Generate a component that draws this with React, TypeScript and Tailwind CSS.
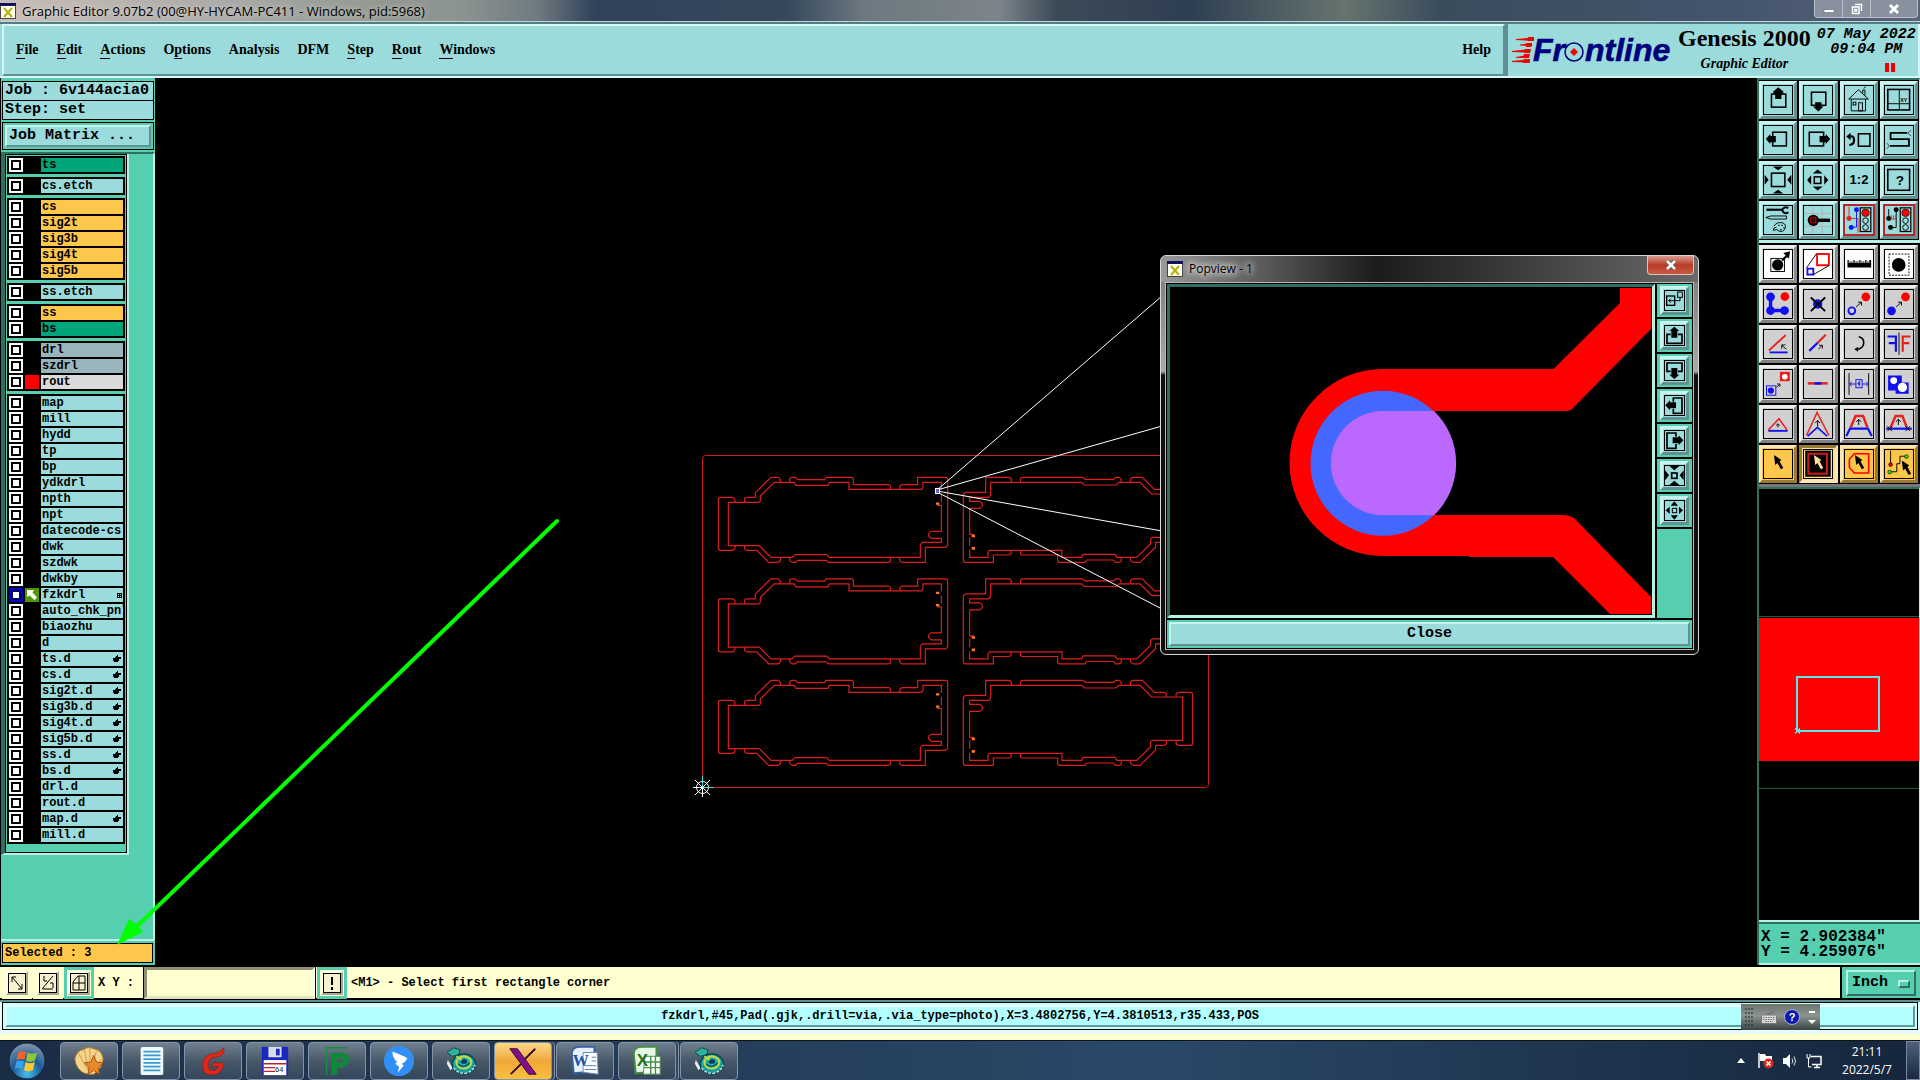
import React, { useState } from 'react';
import type { ReactNode } from 'react';

const MONO = "font-['Liberation_Mono',monospace] font-bold";
const SERIF = "font-['Liberation_Serif',serif] font-bold";
const SANS = "font-['Open_Sans',sans-serif]";

/* ---------- menu ---------- */

const menus: [string, number][] = [
  ['File', 0],
  ['Edit', 0],
  ['Actions', 0],
  ['Options', 1],
  ['Analysis', -1],
  ['DFM', -1],
  ['Step', 0],
  ['Rout', 0],
  ['Windows', 0],
];

function MenuLabel({ text, hot }: { text: string; hot: number }) {
  if (hot < 0) return <>{text}</>;
  return (
    <>
      {text.slice(0, hot)}
      <span className="border-b border-black pb-px">{text[hot]}</span>
      {text.slice(hot + 1)}
    </>
  );
}

/* ---------- layer list ---------- */

type Layer = { name: string; tone?: 'green' | 'gold' | 'slate' | 'grey'; mark?: 'hand' | 'grid'; swatch?: 'red' | 'arrow' };

const groups: Layer[][] = [
  [{ name: 'ts', tone: 'green' }],
  [{ name: 'cs.etch' }],
  [
    { name: 'cs', tone: 'gold' },
    { name: 'sig2t', tone: 'gold' },
    { name: 'sig3b', tone: 'gold' },
    { name: 'sig4t', tone: 'gold' },
    { name: 'sig5b', tone: 'gold' },
  ],
  [{ name: 'ss.etch' }],
  [{ name: 'ss', tone: 'gold' }, { name: 'bs', tone: 'green' }],
  [
    { name: 'drl', tone: 'slate' },
    { name: 'szdrl', tone: 'slate' },
    { name: 'rout', tone: 'grey', swatch: 'red' },
  ],
  [
    { name: 'map' },
    { name: 'mill' },
    { name: 'hydd' },
    { name: 'tp' },
    { name: 'bp' },
    { name: 'ydkdrl' },
    { name: 'npth' },
    { name: 'npt' },
    { name: 'datecode-cs' },
    { name: 'dwk' },
    { name: 'szdwk' },
    { name: 'dwkby' },
    { name: 'fzkdrl', mark: 'grid', swatch: 'arrow' },
    { name: 'auto_chk_pnl' },
    { name: 'biaozhu' },
    { name: 'd' },
    { name: 'ts.d', mark: 'hand' },
    { name: 'cs.d', mark: 'hand' },
    { name: 'sig2t.d', mark: 'hand' },
    { name: 'sig3b.d', mark: 'hand' },
    { name: 'sig4t.d', mark: 'hand' },
    { name: 'sig5b.d', mark: 'hand' },
    { name: 'ss.d', mark: 'hand' },
    { name: 'bs.d', mark: 'hand' },
    { name: 'drl.d' },
    { name: 'rout.d' },
    { name: 'map.d', mark: 'hand' },
    { name: 'mill.d' },
  ],
];

const tones = {
  green: 'bg-[#00a57c]',
  gold: 'bg-[#ffc64c]',
  slate: 'bg-[#9ab4bd]',
  grey: 'bg-[#dadada]',
};

function LayerRow({ layer }: { layer: Layer }) {
  const active = layer.swatch === 'arrow';
  return (
    <li className="flex h-4 items-center gap-0.5">
      <input
        type="checkbox"
        aria-label={`Show ${layer.name}`}
        className={`size-3.5 shrink-0 appearance-none border-2 ${
          active
            ? 'border-[#0000c8] bg-white shadow-[inset_0_0_0_2px_#000060]'
            : 'border-white bg-white shadow-[inset_0_0_0_2px_#000]'
        }`}
      />
      <span className={`flex size-3.5 shrink-0 items-center justify-center ${layer.swatch === 'red' ? 'bg-[#ff0000]' : active ? 'bg-[#4f9a00]' : 'bg-black'}`}>
        {active && (
          <svg viewBox="0 0 14 14" className="size-3.5" aria-hidden="true">
            <path d="M2 2H9L7.500 4.500L12 9.500L9.500 12L4.500 7.500L2 9Z" fill="#fff" />
          </svg>
        )}
      </span>
      <button
        type="button"
        className={`flex h-3.5 min-w-0 flex-1 items-center overflow-hidden whitespace-nowrap pl-px text-left text-[12px] leading-[14px] ${
          layer.tone ? tones[layer.tone] : 'bg-[#9bdbdb]'
        }`}
      >
        {layer.name}
        {layer.mark === 'hand' && (
          <svg viewBox="0 0 8 8" className="mr-0.5 ml-auto size-2 shrink-0" aria-hidden="true" shapeRendering="crispEdges">
            <path d="M4 0H5V2H8V4H6V6H5V7H1V6H0V3H2V2H3V1H4Z" />
          </svg>
        )}
        {layer.mark === 'grid' && (
          <svg viewBox="0 0 5 5" className="mr-px ml-auto size-[5px] shrink-0" aria-hidden="true" shapeRendering="crispEdges">
            <path d="M0 0h5v5H0z" />
            <path d="M1 1h1v1H1zM3 1h1v1H3zM1 3h1v1H1zM3 3h1v1H3z" fill="#9bdbdb" />
          </svg>
        )}
      </button>
    </li>
  );
}

function Sidebar() {
  return (
    <aside className={`flex w-[155px] shrink-0 flex-col border-l border-black bg-[#55cfb0] ${MONO}`}>
      <div className="px-px pt-[3px]">
        <div className="border border-black bg-[#9bdbdb] px-0.5 text-[15px] leading-[18px] whitespace-nowrap">Job : 6v144acia0</div>
        <div className="border border-t-0 border-black bg-[#9bdbdb] px-0.5 text-[15px] leading-[18px]">Step: set</div>
        <div className="mt-0.5 border border-black bg-[#55cfb0] p-0.5">
          <button
            type="button"
            className="block w-full border-2 border-t-[#c8f4f0] border-r-[#5f9291] border-b-[#5f9291] border-l-[#c8f4f0] bg-[#9bdbdb] px-0.5 text-left text-[15px] leading-[18px]"
          >
            Job Matrix ...
          </button>
        </div>
      </div>
      <div className="mt-0.5 flex flex-1 flex-col border-t-2 border-r-2 border-b-2 border-t-[#2f6e61] border-r-[#b6f2e4] border-b-[#b6f2e4]">
        <div className="w-32 border-r-2 border-b-2 border-l-4 border-r-[#b6f2e4] border-b-[#b6f2e4] border-l-[#2f6e61]">
          <div className="border border-black px-px pt-px pb-2">
            {groups.map((g, i) => (
              <ul key={i} className="mb-[3px] border border-black bg-black px-px last:mb-0">
                {g.map((l) => (
                  <LayerRow key={l.name} layer={l} />
                ))}
              </ul>
            ))}
          </div>
        </div>
      </div>
      <div className="my-0.5 mr-0.5 ml-px border border-black bg-[#ffc64c] px-0.5 text-[12px] leading-[18px]">Selected : 3</div>
    </aside>
  );
}

/* ---------- tool icons ---------- */

const K = '#000';
const R = '#e8201c';
const B = '#1010f0';

const cursor = (x: number, y: number, fill = K) => (
  <path transform={`translate(${x} ${y})`} d="M0 0 L24 16 L18 20 L30 42 L22 46 L11 26 L4 32 Z" fill={fill} />
);

const trafficLight = (
  <g>
    <rect x="49" y="6" width="34" height="76" fill="#9bdbdb" stroke={K} strokeWidth="4" />
    <circle cx="66" cy="22" r="12" fill="#f00" stroke={K} strokeWidth="2" />
    <circle cx="66" cy="47" r="9" fill="none" stroke={K} strokeWidth="3" />
    <circle cx="66" cy="69" r="9" fill="none" stroke={K} strokeWidth="3" />
  </g>
);

type Tool = { label: string; art: ReactNode };

const viewTools: Tool[] = [
  { label: 'Pan up', art: <><rect x="24" y="26" width="46" height="42" fill="none" stroke={K} strokeWidth="5" /><path d="M46 4L62 18V24H56V42H36V24H30V18Z" /></> },
  { label: 'Pan down', art: <><rect x="24" y="20" width="46" height="42" fill="none" stroke={K} strokeWidth="5" /><path d="M36 52H56V66H63L46 82L29 66H36Z" /></> },
  { label: 'Home', art: <g fill="none" stroke={K} strokeWidth="3"><path d="M12 42L43 12L75 42Z" /><path d="M20 42V80H66V42" /><rect x="44" y="54" width="12" height="26" /><rect x="26" y="52" width="9" height="9" /><path d="M57 24V13H64V30M61 8L66 2" /></g> },
  { label: 'Coordinates', art: <><rect x="9" y="11" width="70" height="66" fill="none" stroke={K} strokeWidth="5" /><path d="M46 11V77M9 57H79" stroke={K} strokeWidth="3" /><text x="49" y="53" fontSize="17" fontWeight="700" fontFamily="Liberation Sans">XY</text></> },
  { label: 'Pan left', art: <><rect x="28" y="20" width="44" height="44" fill="none" stroke={K} strokeWidth="5" /><path d="M6 42L20 26V32H38V52H20V58Z" /></> },
  { label: 'Pan right', art: <><rect x="17" y="20" width="46" height="44" fill="none" stroke={K} strokeWidth="5" /><path d="M84 42L70 26V32H50V52H70V58Z" /></> },
  { label: 'Previous view', art: <><rect x="43" y="25" width="37" height="40" fill="none" stroke={K} strokeWidth="5" /><path d="M13 33H20Q29 33 29 46Q29 60 14 61" fill="none" stroke={K} strokeWidth="7" /><path d="M4 34L18 22V46Z" /></> },
  { label: 'Serpentine', art: <><path d="M72 22H18V42H77V64H16" fill="none" stroke={K} strokeWidth="6" /><path d="M74 22L84 14M74 24L84 32M14 64L6 55M14 64L6 73" stroke={K} strokeWidth="2" /></> },
  { label: 'Zoom out', art: <><rect x="24" y="23" width="43" height="43" fill="none" stroke={K} strokeWidth="5" /><path d="M28 2H62L45 14ZM28 88H62L45 76ZM2 28V60L15 44ZM88 28V60L75 44Z" /></> },
  { label: 'Zoom in', art: <><rect x="33" y="35" width="21" height="21" fill="none" stroke={K} strokeWidth="5" /><path d="M28 24H60L44 11ZM28 66H60L44 79ZM23 30V60L10 45ZM65 30V60L78 45Z" /></> },
  { label: 'Scale 1:2', art: <text x="45" y="59" textAnchor="middle" fontSize="42" fontWeight="700" fontFamily="Liberation Sans">1:2</text> },
  { label: 'Help', art: <><rect x="9" y="11" width="70" height="67" fill="none" stroke={K} strokeWidth="5" /><text x="48" y="62" textAnchor="middle" fontSize="44" fontWeight="700" fontFamily="Liberation Sans">?</text></> },
  { label: 'Setup', art: <><path d="M8 12H58" stroke={K} strokeWidth="7" /><path d="M78 7A11 9 0 1 0 78 20" fill="none" stroke={K} strokeWidth="6" /><path d="M6 37L22 32H72V42H22Z" fill="none" stroke={K} strokeWidth="3" /><path d="M32 65Q40 50 60 54Q74 60 66 76Q54 88 42 76L30 78Q28 70 40 68" fill="none" stroke={K} strokeWidth="3" /><path d="M46 62h4M56 62h4M62 70h4M52 76h4" stroke={K} strokeWidth="4" /></> },
  { label: 'Probe', art: <><path d="M28 0V90M58 0V90M0 24H90M0 66H90" stroke="#c3a0a5" strokeWidth="2" /><path d="M28 46H84" stroke={K} strokeWidth="11" /><circle cx="30" cy="46" r="18" /><rect x="22" y="38" width="16" height="16" fill="none" stroke="#f00" strokeWidth="3" /><rect x="28" y="44" width="4" height="4" fill="#f00" /></> },
  { label: 'Net check', art: <><path d="M13 2V40M13 40H42V86" fill="none" stroke={R} strokeWidth="3" /><circle cx="13" cy="40" r="8" fill={R} /><path d="M37 12V68H20" fill="none" stroke={B} strokeWidth="3" /><circle cx="37" cy="12" r="8" fill={B} /><circle cx="20" cy="69" r="8" fill={B} />{trafficLight}</> },
  { label: 'Net compare', art: <><path d="M12 10V40M36 12V69H18" fill="none" stroke={K} strokeWidth="3" /><circle cx="12" cy="40" r="8" /><circle cx="36" cy="12" r="8" /><circle cx="18" cy="69" r="8" /><path d="M20 30V42H34M27 30V42M34 30V42" fill="none" stroke={R} strokeWidth="3" />{trafficLight}</> },
];

const whiteTools: Tool[] = [
  { label: 'Resize feature', art: <><rect x="22" y="27" width="44" height="42" fill="none" stroke={K} strokeWidth="3" /><circle cx="44" cy="48" r="18" /><path d="M58 34L76 16" stroke={K} strokeWidth="7" /><path d="M62 10L84 4L80 28Z" /></> },
  { label: 'Transform', art: <><rect x="42" y="13" width="38" height="36" fill="none" stroke="#f00" strokeWidth="6" /><rect x="11" y="60" width="19" height="19" fill="none" stroke={B} strokeWidth="6" /><path d="M8 58L40 12M32 78L80 50" stroke={K} strokeWidth="3" /></> },
  { label: 'Measure', art: <path d="M8 56V32H12V42H15V36H18V42H21V36H24V42H27V32H31V42H34V36H37V42H40V36H43V42H46V32H50V42H53V36H56V42H59V36H62V42H65V32H69V42H72V36H75V42H78V32H84V56Z" /> },
  { label: 'Select area', art: <><rect x="13" y="13" width="64" height="68" fill="none" stroke={K} strokeWidth="3" strokeDasharray="6 4" /><circle cx="44" cy="48" r="22" /></> },
];

const editTools: Tool[] = [
  { label: 'Add chain', art: <><path d="M21 22V66H66" fill="none" stroke={B} strokeWidth="11" /><circle cx="21" cy="22" r="14" fill={B} /><circle cx="21" cy="66" r="14" fill={B} /><circle cx="66" cy="66" r="14" fill={B} /><circle cx="67" cy="21" r="14" fill="#f00" /></> },
  { label: 'Delete', art: <><circle cx="44" cy="45" r="15" fill={B} /><path d="M22 24L68 68M68 24L22 68" stroke={K} strokeWidth="6" /></> },
  { label: 'Move', art: <><circle cx="67" cy="22" r="14" fill="#f00" /><circle cx="22" cy="67" r="11" fill="none" stroke={B} strokeWidth="6" /><path d="M36 54L52 40M42 39H53V50" fill="none" stroke={K} strokeWidth="3" /></> },
  { label: 'Copy', art: <><circle cx="66" cy="22" r="14" fill="#f00" /><circle cx="21" cy="67" r="14" fill={B} /><path d="M36 54L52 40M42 39H53V50" fill="none" stroke={K} strokeWidth="3" /></> },
  { label: 'Rotate', art: <><path d="M16 66L70 16" stroke={R} strokeWidth="6" /><path d="M18 72H76" stroke={B} strokeWidth="6" /><path d="M72 62L58 50M57 60V48H69" fill="none" stroke={K} strokeWidth="3" /></> },
  { label: 'Stretch', art: <><path d="M44 41L70 15" stroke={R} strokeWidth="7" /><path d="M17 67L44 41" stroke={B} strokeWidth="7" /><path d="M46 62L58 50M48 49H59V60" fill="none" stroke={K} strokeWidth="3" /></> },
  { label: 'Arc', art: <><path d="M44 22Q62 26 60 44Q58 60 38 62" fill="none" stroke={K} strokeWidth="5" /><path d="M30 62L42 54V70Z" /></> },
  { label: 'Mirror', art: <><path d="M45 8V80" stroke={K} strokeWidth="3" /><path d="M8 21H35V70M12 42H35" fill="none" stroke={B} strokeWidth="7" /><path d="M82 21H57V70M78 42H57" fill="none" stroke={R} strokeWidth="7" /></> },
  { label: 'Replace', art: <><rect x="51" y="6" width="32" height="30" fill={R} /><circle cx="67" cy="22" r="9" fill="#fff" /><rect x="8" y="51" width="30" height="30" fill="#d0d0d0" stroke={B} strokeWidth="3" /><circle cx="22" cy="66" r="10" fill={B} /><path d="M40 56L50 46M42 45H51V54" fill="none" stroke={K} strokeWidth="3" /></> },
  { label: 'Break', art: <><path d="M12 43H76" stroke={R} strokeWidth="8" /><path d="M34 43H56" stroke={B} strokeWidth="8" /></> },
  { label: 'Spacing', art: <><path d="M13 10V80M76 10V80" stroke={K} strokeWidth="3" /><rect x="35" y="31" width="20" height="26" fill="none" stroke={B} strokeWidth="3" /><path d="M14 45H34M56 45H75M22 38L15 45L22 52M68 38L75 45L68 52M50 34L40 45H50M46 38V52" fill="none" stroke={B} strokeWidth="3" /></> },
  { label: 'Merge', art: <><path d="M10 18H54V40H76V76H34V66H10Z" fill={B} /><circle cx="28" cy="34" r="11" fill="#fff" /><circle cx="56" cy="56" r="15" fill="#fff" /></> },
  { label: 'Corner', art: <><path d="M14 64L48 28L74 64" fill="none" stroke={R} strokeWidth="5" /><path d="M14 67H76" stroke={B} strokeWidth="6" /><path d="M45 56V46M39 50L45 44L51 50" fill="none" stroke={K} strokeWidth="3" /></> },
  { label: 'Sharp corner', art: <><path d="M8 82L42 8L80 82" fill="none" stroke={R} strokeWidth="5" /><path d="M12 84L43 56L74 84" fill="none" stroke={B} strokeWidth="5" /><path d="M44 52V34M36 42L44 34L52 42" fill="none" stroke={K} strokeWidth="3" /></> },
  { label: 'Trapezoid', art: <><path d="M18 56L34 19H58L72 56" fill="none" stroke={R} strokeWidth="8" /><path d="M4 84L16 60H74L86 84" fill="none" stroke={B} strokeWidth="7" /><path d="M44 48V30M36 38L44 30L52 38" fill="none" stroke={K} strokeWidth="3" /></> },
  { label: 'Trapezoid cut', art: <><path d="M18 56L34 19H56L70 56" fill="none" stroke={R} strokeWidth="8" /><path d="M4 60H86" stroke={B} strokeWidth="7" /><path d="M43 48V30M35 38L43 30L51 38M8 52L22 68M22 52L8 68M66 52L80 68M80 52L66 68" fill="none" stroke={K} strokeWidth="3" /></> },
];

const selectTools: Tool[] = [
  { label: 'Select', art: cursor(32, 16) },
  { label: 'Select rectangle', art: <><rect x="4" y="2" width="82" height="84" fill="#000" /><rect x="14" y="12" width="60" height="64" fill="none" stroke="#c4181c" strokeWidth="7" />{cursor(32, 16, '#ffdd9a')}</> },
  { label: 'Select polygon', art: <><path d="M30 12H76V74H30L14 56V30Z" fill="none" stroke="#f00" strokeWidth="5" />{cursor(32, 16)}</> },
  { label: 'Select net', art: <><path d="M18 2V46M20 70H38V44H48V20H66" fill="none" stroke={K} strokeWidth="3" /><circle cx="18" cy="47" r="6" fill="#e00" stroke={K} strokeWidth="2" /><circle cx="15" cy="71" r="6" fill="#2e0" stroke={K} strokeWidth="2" /><circle cx="69" cy="21" r="6" fill="#2e0" stroke={K} strokeWidth="2" />{cursor(54, 34)}</> },
];

type Tint = 'cyan' | 'red' | 'white' | 'grey' | 'gold' | 'goldOn';

const tints: Record<Tint, string> = {
  cyan: 'border-t-[#c9f3f0] border-l-[#c9f3f0] border-r-[#5f9291] border-b-[#5f9291] bg-[#9bdbdb]',
  red: 'border-t-[#c9f3f0] border-l-[#c9f3f0] border-r-[#5f9291] border-b-[#5f9291] bg-[#b3262c]',
  white: 'border-t-[#eeeeee] border-l-[#eeeeee] border-r-[#8c8c8c] border-b-[#8c8c8c] bg-[#d8d8d8]',
  grey: 'border-t-[#ececec] border-l-[#ececec] border-r-[#828282] border-b-[#828282] bg-[#d0d0d0]',
  gold: 'border-t-[#ffe6b0] border-l-[#ffe6b0] border-r-[#9a7a30] border-b-[#9a7a30] bg-[#ffc64c]',
  goldOn: 'border-t-[#9a7a30] border-l-[#9a7a30] border-r-[#ffe6b0] border-b-[#ffe6b0] bg-[#ffdd9a]',
};

const faces: Record<Tint, string> = {
  cyan: 'border-black bg-[#9bdbdb]',
  red: 'border-[#b3262c] bg-[#9bdbdb]',
  white: 'border-black bg-white',
  grey: 'border-black bg-[#d0d0d0]',
  gold: 'border-black bg-[#ffc64c]',
  goldOn: 'border-black bg-[#ffdd9a]',
};

function ToolButton({ tool, tint }: { tool: Tool; tint: Tint }) {
  return (
    <button type="button" aria-label={tool.label} className={`flex h-[38px] items-center justify-center border-3 ${tints[tint]}`}>
      <span className={`block size-[30px] border ${faces[tint]}`}>
        <svg viewBox="0 0 90 90" className="size-full overflow-hidden">
          {tool.art}
        </svg>
      </span>
    </button>
  );
}

function RightPanel() {
  return (
    <aside className="flex w-[163px] shrink-0 flex-col border-l-2 border-[#2f6e61] bg-black">
      <div className="grid grid-cols-4 gap-0.5 border-t-2 border-r border-b-3 border-t-[#2f6e61] border-r-[#b6f2e4] border-b-[#b6f2e4] bg-black pt-px pr-px pb-px">
        {viewTools.map((t, i) => (
          <ToolButton key={t.label} tool={t} tint={i > 13 ? 'red' : 'cyan'} />
        ))}
      </div>
      <div className="grid grid-cols-4 gap-0.5 border-b-3 border-b-[#777777] bg-black pt-0.5 pr-0.5 pb-px">
        {whiteTools.map((t) => (
          <ToolButton key={t.label} tool={t} tint="white" />
        ))}
        {editTools.map((t) => (
          <ToolButton key={t.label} tool={t} tint="grey" />
        ))}
        {selectTools.map((t, i) => (
          <ToolButton key={t.label} tool={t} tint={i === 1 ? 'goldOn' : 'gold'} />
        ))}
      </div>
      <div className="flex min-h-0 flex-1 flex-col border-t-2 border-r border-b-2 border-t-[#2f6e61] border-r-[#b6f2e4] border-b-[#b6f2e4]">
        <svg viewBox="0 0 160 430" preserveAspectRatio="none" className="h-full w-full" role="img" aria-label="Overview map" shapeRendering="crispEdges">
          <path d="M0 127.500H160M0 298.500H160" stroke="#1c5c2c" />
          <rect x="0" y="129" width="160" height="142" fill="#ff0000" />
          <rect x="37.500" y="187.500" width="82" height="54" fill="none" stroke="#62e6e6" strokeWidth="2" />
          <path d="M36 239L41 244M41 239L36 244" stroke="#62e6e6" />
        </svg>
      </div>
      <output className={`border-t-2 border-b-2 border-t-[#2f6e61] border-b-[#b6f2e4] bg-[#55cfb0] px-0.5 pt-1.5 pb-[3px] text-[16px] leading-[15px] ${MONO}`}>
        <span className="block">X = 2.902384"</span>
        <span className="block">Y = 4.259076"</span>
      </output>
    </aside>
  );
}

/* ---------- board view ---------- */

const boardPath =
  'M134 187Q138 172 125 172H92Q85 172 85 179V324Q85 331 92 331H125Q138 329 134 317' +
  'M166 187Q158 172 173 172H196V158L243 112H263Q275 117 270 127' +
  'M166 317Q158 328 173 331H200L236 367H264Q275 364 270 352' +
  'M301 127Q294 112 308 112H316L323 119H404L408 112H486L490 116V134H597Q605 138 600 147' +
  'M632 147Q624 137 638 134H683V112H766Q773 112 773 119V316L767 322H706V367H636Q624 363 631 352' +
  'M600 352Q606 367 594 367H416L407 361H322L316 367H307Q295 362 301 352' +
  'M754 150V127H699V142L695 148H477V127H418L414 136H318L312 127H253L211 168V183L206 187H115V317H208L243 352H306L315 344H410L418 352H691V314L697 307H754V295H724Q706 284 724 274H754V196H741M754 187V162';

function Boards() {
  return (
    <svg viewBox="155 78 1602 887" className="h-full w-full bg-black" role="img" aria-label="Panel layout">
      <rect x="702.500" y="455.500" width="506" height="332" rx="3" fill="none" stroke="#d01c1c" />
      <g transform="translate(690 440) scale(0.33333)">
        {[0, 304.5, 609].map((y) => (
          <g key={y} transform={`translate(0 ${y})`} fill="none" stroke="#e01e1e" strokeWidth="3.500">
            <path d={boardPath} />
            <path d="M738 154h10M738 191h10" stroke="#f08020" strokeWidth="7" />
            <g transform="translate(1593 479) rotate(180)">
              <path d={boardPath} />
              <path d="M738 154h10M738 191h10" stroke="#ff7020" strokeWidth="8" />
            </g>
          </g>
        ))}
      </g>
      <g stroke="#ffffff" fill="none">
        <path d="M937 490L1162 296M937 490L1162 426M937 491L1162 531M937 492L1162 609" />
        <rect x="935.500" y="488.500" width="4" height="5" fill="#6a60d0" />
        <path d="M693 787.500H712M702.500 778V797M695 780L710 795M710 780L695 795" />
        <circle cx="702.500" cy="787.500" r="6" />
        <path d="M703 787.500H714M702.500 776V787" stroke="#50d8d8" />
      </g>
    </svg>
  );
}

/* ---------- pop view window ---------- */

const popTools: Tool[] = [
  { label: 'Link view', art: <><rect x="8" y="18" width="24" height="28" fill="none" stroke={K} strokeWidth="4" /><rect x="41" y="6" width="14" height="16" fill="none" stroke={K} strokeWidth="3" /><path d="M14 32H48V22M20 26L14 32L20 38" fill="none" stroke={K} strokeWidth="3" /></> },
  { label: 'Pop pan up', art: <><path d="M20 28H9V55H54V28H42" fill="none" stroke={K} strokeWidth="5" /><path d="M31 5L46 18H40V38H22V18H16Z" /></> },
  { label: 'Pop pan down', art: <><path d="M20 34H9V9H54V34H42" fill="none" stroke={K} strokeWidth="5" /><path d="M31 57L46 44H40V24H22V44H16Z" /></> },
  { label: 'Pop pan left', art: <><path d="M28 20V9H54V55H28V42" fill="none" stroke={K} strokeWidth="5" /><path d="M4 31L18 16V22H36V40H18V46Z" /></> },
  { label: 'Pop pan right', art: <><path d="M36 20V9H9V55H36V42" fill="none" stroke={K} strokeWidth="5" /><path d="M58 31L44 16V22H26V40H44V46Z" /></> },
  { label: 'Pop zoom out', art: <><rect x="23" y="24" width="16" height="16" fill="none" stroke={K} strokeWidth="5" /><path d="M16 3H46L31 16ZM16 60H46L31 47ZM3 16V46L15 31ZM59 16V46L47 31Z" /></> },
  { label: 'Pop zoom in', art: <><rect x="25" y="25" width="13" height="13" fill="none" stroke={K} strokeWidth="3" /><path d="M20 17H42L31 4ZM20 46H42L31 59ZM17 20V42L5 31ZM45 20V42L57 31Z" /></> },
];

function XAppIcon() {
  return (
    <svg viewBox="0 0 16 16" className="size-4 shrink-0" aria-hidden="true">
      <path d="M0 0h16v16H0z" fill="#444" />
      <path d="M1 3h14v12H1z" fill="#fffef0" />
      <path d="M0 0h16v3H0z" fill="#101060" />
      <path d="M4 5l8 9M12 5l-8 9" stroke="#b8b010" strokeWidth="2" />
    </svg>
  );
}

function PopView({ onClose }: { onClose: () => void }) {
  return (
    <section
      aria-label="Popview - 1"
      className="absolute top-[255px] left-[1160px] flex w-[539px] flex-col rounded-md border border-[#d8d8d8] bg-linear-to-b from-[#777777] from-0% via-[#a8a8a8] via-29% to-[#101010] to-30% px-1 pb-1"
    >
      <header className="-mx-1 flex h-[26px] items-center gap-1.5 rounded-t-md bg-linear-to-r from-[#9a9a9a] via-[#1c1c1c] via-40% to-[#6a6a6a] pl-1.5">
        <XAppIcon />
        <h2 className={`flex-1 text-[12px] leading-5 text-black [text-shadow:0_0_6px_#e0e0e0,0_0_6px_#e0e0e0,0_0_8px_#e0e0e0] ${SANS}`}>Popview - 1</h2>
        <button
          type="button"
          aria-label="Close window"
          onClick={onClose}
          className="mr-1 flex h-[19px] w-[47px] items-center justify-center self-start rounded-b border border-t-0 border-[#e0c0b8] bg-linear-to-b from-[#d89a90] via-[#b83a28] via-50% to-[#c85a40]"
        >
          <svg viewBox="0 0 12 10" className="h-2.5 w-3" aria-hidden="true">
            <path d="M2 1l8 8M10 1L2 9" stroke="#555" strokeWidth="4" />
            <path d="M2 1l8 8M10 1L2 9" stroke="#fff" strokeWidth="2.500" />
          </svg>
        </button>
      </header>
      <div className="border border-[#b8b8b8] bg-black p-px">
        <div className="flex">
          <div className="min-w-0 flex-1 border-3 border-t-[#2f6e61] border-r-[#b6f2e4] border-b-[#b6f2e4] border-l-[#2f6e61]">
            <svg viewBox="20 37 482 328" className="block h-auto w-full" role="img" aria-label="Magnified pad">
              <path
                fill="#ff0000"
                d="M470 38V53L403.500 119H233A93.300 93.300 0 0 0 233 306H319V307H403L460 364H501V347L424 268Q419 265 411 265H233A52 52 0 0 1 233 161H416Q421 161 424 157L501 79V38Z"
              />
              <circle cx="233" cy="213.300" r="72.500" fill="#4468ff" />
              <path fill="#bb68ff" d="M233 161H284A72.500 72.500 0 0 1 284 265.300H233A52 52 0 0 1 233 161Z" />
            </svg>
          </div>
          <div className="ml-0.5 flex w-[35px] flex-col bg-[#55cfb0]">
            {popTools.map((t) => (
              <button key={t.label} type="button" aria-label={t.label} className="flex h-[35px] items-center justify-center border-b-2 border-black">
                <span className="flex size-[29px] items-center justify-center border-3 border-t-[#c9f3f0] border-r-[#5f9291] border-b-[#5f9291] border-l-[#c9f3f0] bg-[#9bdbdb]">
                  <svg viewBox="0 0 63 63" className="size-[21px] shrink-0">
                    <rect x="1.500" y="1.500" width="60" height="60" fill="none" stroke={K} strokeWidth="3" />
                    {t.art}
                  </svg>
                </span>
              </button>
            ))}
          </div>
        </div>
        <div className="mt-0.5 bg-[#55cfb0] p-0.5">
          <button
            type="button"
            onClick={onClose}
            className={`block w-full border-2 border-t-[#c8f4f0] border-r-[#5f9291] border-b-[#5f9291] border-l-[#c8f4f0] bg-[#9bdbdb] text-center text-[15px] leading-5 ${MONO}`}
          >
            Close
          </button>
        </div>
      </div>
    </section>
  );
}

/* ---------- header ---------- */

function TitleBar() {
  return (
    <header className="flex h-[22px] shrink-0 items-center gap-1.5 border-b border-[#c8d0d8] bg-[linear-gradient(to_right,#c9bdb6_0%,#a9aaa8_12%,#93988f_20%,#8c9492_24%,#6f7a80_28%,#2f4258_31%,#35485c_41%,#6d7880_45%,#7c858a_52%,#3c4a58_55%,#2e3f52_62%,#66746f_70%,#3a4c5c_75%,#44546c_90%,#56647a_100%)]">
      <XAppIcon />
      <h1 className={`flex-1 text-[13px] leading-5 text-black [text-shadow:0_0_6px_#ffffffb0] ${SANS}`}>
        Graphic Editor 9.07b2 (00@HY-HYCAM-PC411 - Windows, pid:5968)
      </h1>
      <div className="mr-0.5 flex h-[18px] self-start overflow-hidden rounded-b border border-t-0 border-[#b8c0c8] bg-[#8990a0]">
        <button type="button" aria-label="Minimize" className="flex w-7 items-center justify-center border-r border-[#b8c0c8]">
          <svg viewBox="0 0 12 12" className="size-3"><path d="M1 6.500h10v3H1z" fill="#fff" stroke="#556" strokeWidth=".5" /></svg>
        </button>
        <button type="button" aria-label="Restore" className="flex w-7 items-center justify-center border-r border-[#b8c0c8]">
          <svg viewBox="0 0 12 12" className="size-3"><path d="M4 1.500h6.500V8M1.500 4H8v6.500H1.500zM4 6.500h1.500V8H4z" fill="none" stroke="#fff" strokeWidth="1.500" /></svg>
        </button>
        <button type="button" aria-label="Close" className="flex w-[46px] items-center justify-center">
          <svg viewBox="0 0 12 12" className="size-3"><path d="M2 2l8 8M10 2l-8 8" stroke="#fff" strokeWidth="3" /></svg>
        </button>
      </div>
    </header>
  );
}

function Logo() {
  return (
    <svg viewBox="0 -6 166 42" className="h-[42px] w-[166px] shrink-0" role="img" aria-label="Frontline">
      <g fill="#f00000">
        <path d="M4 3L22 1.500V5L4 4ZM8 8.500L20 7V10L8 9.500ZM0 15L18 13V16.500L0 16ZM4 21L16 19V22L4 22ZM0 25L18 23V26.500L0 26Z" />
        <path d="M16 1h6l-1 4h-5zM14 7h6l-1 4h-5zM13 13h6l-1 4h-6zM12 18h6l-1 4h-6zM12 23h6l-1 4h-6z" />
      </g>
      <g fill="#00007c" stroke="#00007c" strokeWidth=".6" fontFamily="Liberation Sans" fontWeight="700" fontStyle="italic" fontSize="32">
        <text x="21" y="25">Fr</text>
        <text x="73" y="25">ntline</text>
      </g>
      <circle cx="62" cy="16" r="9" fill="#9bdbdb" stroke="#00007c" strokeWidth="1.500" />
      <path d="M62 12L66 16L62 20L58 16Z" fill="#f00000" />
    </svg>
  );
}

const RAISED = 'border-2 border-t-[#d4f6f4] border-r-[#5f8f92] border-b-[#5f8f92] border-l-[#d4f6f4]';

function MenuBar() {
  return (
    <div className="flex h-14 shrink-0 border-t-2 border-b-2 border-t-[#4f7f82] border-b-[#d4f6f4] bg-[#9bdbdb]">
      <nav className={`ml-0.5 flex min-w-0 flex-1 items-center gap-[18px] px-3 text-[14px] ${RAISED} ${SERIF}`}>
        {menus.map(([text, hot]) => (
          <button key={text} type="button" className="leading-5">
            <MenuLabel text={text} hot={hot} />
          </button>
        ))}
        <button type="button" className="ml-auto leading-5">
          Help
        </button>
      </nav>
      <div className="flex w-[415px] shrink-0 items-start border-r-2 border-l-3 border-r-[#d4f6f4] border-l-[#5f8f92] pl-1">
        <div className="pt-1.5">
          <Logo />
        </div>
        <div className={`text-center whitespace-nowrap ${SERIF}`}>
          <div className="text-[24px] leading-7">Genesis 2000</div>
          <div className="pt-px text-[14px] leading-[22px] italic">Graphic Editor</div>
        </div>
        <div className={`flex flex-1 flex-col items-center pt-[3px] pl-1 text-[15px] leading-[15px] whitespace-nowrap italic ${MONO}`}>
          <div>07 May 2022</div>
          <div>09:04 PM</div>
          <div className="mt-1.5 flex gap-0.5 pl-12" aria-label="Paused">
            <span className="h-[9px] w-1 bg-[#f00000]" />
            <span className="h-[9px] w-1 bg-[#f00000]" />
          </div>
        </div>
      </div>
    </div>
  );
}

/* ---------- command row ---------- */

function CommandButton({ label, teal, children }: { label: string; teal?: boolean; children: ReactNode }) {
  return (
    <button type="button" aria-label={label} className={`h-8 border-3 p-px ${teal ? 'border-[#55cfb0]' : 'border-[#ffffcf]'}`}>
      <span className="flex h-full items-center border-2 border-t-[#ffffe8] border-r-[#a8a890] border-b-[#a8a890] border-l-[#ffffe8] bg-[#f6f1cf]">
        <svg viewBox="0 0 18 20" className="h-5 w-[18px]" fill="none" stroke="#000">
          <rect x="0.500" y="0.500" width="17" height="19" />
          {children}
        </svg>
      </span>
    </button>
  );
}

function CommandRow() {
  return (
    <form className={`flex h-[35px] shrink-0 items-center gap-0.5 border-y-2 border-black bg-[#ffffcf] text-[12px] ${MONO}`} onSubmit={(e) => e.preventDefault()}>
      <div className="flex gap-px pl-0.5">
        <CommandButton label="Snap to endpoint"><path d="M4 4l10 12M4 9V4h4M10 16h4v-5" /></CommandButton>
        <CommandButton label="Snap angle"><path d="M3 16L14 3M4 16h10M5 3v5h3M11 10h3v5" /></CommandButton>
        <CommandButton label="Snap grid" teal><path d="M3 9L8 3h7v14H3zM3 10h12M9 3v14" /></CommandButton>
      </div>
      <label htmlFor="xy" className="w-[46px] pl-0.5 whitespace-pre">X Y :</label>
      <input
        id="xy"
        type="text"
        className="h-8 w-[171px] border-3 border-t-[#8f8f78] border-r-[#ffffe8] border-b-[#e0e0bc] border-l-[#8f8f78] bg-[#ffffcf] px-1 outline-1 outline-black"
        defaultValue=""
      />
      <CommandButton label="Execute" teal><path d="M9 4v8M9 14v3" strokeWidth="2" /></CommandButton>
      <p className="flex-1 pl-0.5">&lt;M1&gt; - Select first rectangle corner</p>
      <div className="flex h-full items-center border-l-2 border-black bg-[#55cfb0] px-1">
        <div className="relative border-2 border-t-[#b6f2e4] border-r-[#2f6e61] border-b-[#2f6e61] border-l-[#b6f2e4]">
          <select aria-label="Units" className="h-[22px] w-[66px] appearance-none bg-transparent pl-1 text-[15px]">
            <option>Inch</option>
            <option>MM</option>
          </select>
          <span className="pointer-events-none absolute top-2 right-1 h-2 w-3 border-2 border-t-[#b6f2e4] border-r-[#2f6e61] border-b-[#2f6e61] border-l-[#b6f2e4]" />
        </div>
      </div>
    </form>
  );
}

function StatusBar() {
  return (
    <footer className="relative shrink-0 border-t-2 border-[#5f8f92] bg-[#ffffcf]">
      <div className="bg-[#e4fdfa] px-0.5 pb-1">
        <div className="border border-black bg-[#c8ffff] p-0.5">
          <p className={`border-2 border-t-[#e8ffff] border-r-[#5f9a9a] border-b-[#5f9a9a] border-l-[#e8ffff] bg-[#b3ffff] text-center text-[12px] leading-[18px] ${MONO}`}>
            fzkdrl,#45,Pad(.gjk,.drill=via,.via_type=photo),X=3.4802756,Y=4.3810513,r35.433,POS
          </p>
        </div>
      </div>
      <div className="h-1.5" />
      <div className="absolute top-0.5 right-[100px] flex h-[26px] w-[79px] items-center justify-between bg-linear-to-b from-[#6c7470] via-[#8c9490] via-45% to-[#3a4442] px-1">
        <svg viewBox="0 0 8 18" className="h-[18px] w-2" aria-hidden="true">
          <path d="M1 0v18M4 0v18M7 0v18" stroke="#222" strokeDasharray="2 2" />
        </svg>
        <button type="button" aria-label="Keyboard">
          <svg viewBox="0 0 16 14" className="h-3.5 w-4">
            <rect x="0.500" y="5" width="15" height="8.500" rx="1" fill="#d8d8d8" stroke="#777" />
            <path d="M2 7.500h12M2 9.500h12M4 11.500h8" stroke="#777" strokeDasharray="1.500 1" />
            <path d="M6 4.500l7-3" stroke="#666" />
          </svg>
        </button>
        <button type="button" aria-label="Input help">
          <svg viewBox="0 0 16 16" className="size-4">
            <circle cx="8" cy="8" r="7.500" fill="#0c1ca8" stroke="#a8b0e0" />
            <text x="8" y="12" textAnchor="middle" fontSize="11" fontWeight="700" fontFamily="Liberation Sans" fill="#fff">?</text>
          </svg>
        </button>
        <button type="button" aria-label="Language bar options">
          <svg viewBox="0 0 8 16" className="h-4 w-2" fill="#fff"><path d="M1 2h6v2H1zM0 11h8l-4 4z" /></svg>
        </button>
      </div>
    </footer>
  );
}

/* ---------- taskbar ---------- */

const genesisArt = (
  <>
    <path d="M2 8L9 3L16 5L15 10L8 12Z" fill="#30b0a0" stroke="#084848" />
    <path d="M3 16L8 24L6 27L2 20Z" fill="#e8f0f0" />
    <ellipse cx="20" cy="20" rx="12.500" ry="10.500" fill="#18a0a0" stroke="#064850" strokeWidth="1.500" />
    <path d="M9 24Q14 31 22 30Q30 28 32 21" fill="none" stroke="#b8e8e0" strokeWidth="1.500" strokeDasharray="3 1.500" />
    <ellipse cx="20" cy="18.500" rx="8" ry="6.500" fill="#20b8a8" stroke="#d0d840" strokeWidth="2" />
    <path d="M14 20Q20 26 26 19" fill="none" stroke="#086068" strokeWidth="2" />
    <ellipse cx="20" cy="17.500" rx="3.500" ry="2.500" fill="#0a3a68" />
    <path d="M12 12L18 16" stroke="#d0d840" strokeWidth="2" />
  </>
);

const tasks: { label: string; active?: boolean; stacked?: boolean; art: ReactNode }[] = [
  { label: 'Shell', art: <><path d="M17 31C6 30 2 20 2 14Q5 5 11 5Q16 1 22 4Q30 5 32 14Q32 24 22 31Z" fill="#f4d48c" stroke="#b87a28" /><path d="M17 29L6 9M17 29L12 5M18 29V3M19 29L25 6M20 29L31 14" stroke="#d09a48" /><path d="M22 11l3 7 7 1-5 5 1 7-6-4-6 4 1-7-5-5 7-1z" fill="#e88a28" stroke="#a85010" /></> },
  { label: 'Notepad', art: <><rect x="6" y="2" width="24" height="30" rx="2" fill="#f0f8fc" /><path d="M9 7h18M9 11h18M9 15h18M9 19h18M9 23h18M9 27h18" stroke="#3a9ccc" strokeWidth="2" /></> },
  { label: 'Gerber viewer', art: <path d="M28 3Q24 9 18 9Q8 9 6 20Q5 32 16 32Q26 32 29 19H17L16 23H23Q20 28 16 27Q11 26 12 19Q14 13 20 13Q28 12 29 6Z" fill="#e02818" stroke="#801008" strokeWidth=".5" /> },
  { label: 'Save tool', art: <><path d="M3 2h28v30H3z" fill="#1828c0" /><path d="M10 2h14v11H10z" fill="#d8dce8" /><path d="M18 4h4v7h-4z" fill="#1828c0" /><path d="M5 16h24v16H5z" fill="#fff" /><path d="M5 20h24M5 24h12M5 28h12" stroke="#b82030" strokeWidth="1.500" /><text x="17" y="29" fontSize="8" fontFamily="Liberation Sans" fill="#222">64</text></> },
  { label: 'P tool', art: <><path d="M6 32V3h22" fill="none" stroke="#109040" strokeWidth="1.500" /><path d="M11 32V8h11Q31 9 30 17Q28 25 17 24V31ZM17 14V19H22Q25 16 22 14Z" fill="#10883c" /></> },
  { label: 'Messenger', art: <><circle cx="17" cy="17" r="16" fill="#3090f8" /><path d="M10 7Q20 11 26 14Q24 18 20 20L22 22L16 29L17 23L13 20L15 18Q10 14 10 7Z" fill="#fff" /></> },
  { label: 'Genesis', art: genesisArt },
  { label: 'X server', active: true, stacked: true, art: <><path d="M3 4H11L31 31H23Z" fill="#801088" stroke="#300838" /><path d="M30 4L19 15M15 20L4 31" stroke="#300838" strokeWidth="2" /></> },
  { label: 'Word', art: <><path d="M3 9Q3 2 12 2H27V28L5 30Z" fill="#e8f0fa" stroke="#3060a8" strokeWidth="2" /><path d="M15 8h15l1 23-16-2z" fill="#fff" stroke="#6888c0" /><path d="M24 13h5M24 17h5M17 22h12M17 26h12" stroke="#5078b8" /><text x="4" y="22" fontSize="17" fontWeight="700" fontFamily="Liberation Serif" fill="#2450a0">W</text></> },
  { label: 'Excel', stacked: true, art: <><path d="M3 9Q3 2 12 2H27V28L5 30Z" fill="#e8f6e8" stroke="#409040" strokeWidth="2" /><path d="M15 12h16v19H13z" fill="#fff" stroke="#409040" /><path d="M14 18h17M14 24h17M21 12v19M26 12v19" stroke="#409040" strokeWidth="1.500" /><text x="6" y="22" fontSize="18" fontWeight="700" fontFamily="Liberation Sans" fill="#207020">X</text></> },
  { label: 'Genesis 2', art: genesisArt },
];

function Taskbar() {
  return (
    <nav aria-label="Taskbar" className="flex h-10 shrink-0 items-center border-t border-[#0a1420] bg-linear-to-r from-[#1a2c44] via-[#2a4868] via-60% to-[#16263c]">
      <button type="button" aria-label="Start" className="flex w-[60px] items-center justify-center pr-1.5">
        <svg viewBox="0 0 38 38" className="size-[38px]">
          <defs>
            <radialGradient id="orb" cx=".5" cy=".85" r=".8">
              <stop offset="0" stopColor="#48c0f0" />
              <stop offset=".5" stopColor="#1a5a98" />
              <stop offset="1" stopColor="#7890a8" />
            </radialGradient>
          </defs>
          <circle cx="19" cy="19" r="18" fill="url(#orb)" stroke="#0c2440" />
          <path d="M10 11Q14 8 18 10L16.500 18Q12 16 8.500 18.500Z" fill="#f06428" />
          <path d="M19.500 10.500Q24 13 29 10.500L27 18.500Q22 21 18 18.500Z" fill="#8cc838" />
          <path d="M8 20Q12 17.500 16 19.500L14.500 27Q10 25 6.800 27Z" fill="#38a0e8" />
          <path d="M17.500 20Q22 22.500 26.800 20L25 28Q20 30.500 16 28Z" fill="#fcc830" />
        </svg>
      </button>
      <div className="flex gap-1">
        {tasks.map((t) => (
          <button
            key={t.label}
            type="button"
            aria-label={t.label}
            className={`flex h-[38px] w-[58px] items-center justify-center rounded-sm border border-[#8494a8] ${
              t.active
                ? 'bg-linear-to-b from-[#f8d888] via-[#f0a838] to-[#f8c040]'
                : 'bg-linear-to-b from-[#70808f] via-[#485868] to-[#34465c]'
            } ${t.stacked ? 'shadow-[2px_0_0_#34465c,3px_0_0_#8494a8]' : ''}`}
          >
            <svg viewBox="0 0 34 34" className="size-8">
              {t.art}
            </svg>
          </button>
        ))}
      </div>
      <div className="ml-auto flex h-full items-center">
        <button type="button" aria-label="Show hidden icons" className="mr-3">
          <svg viewBox="0 0 8 5" className="h-[5px] w-2"><path d="M0 5L4 0L8 5Z" fill="#fff" /></svg>
        </button>
        <button type="button" aria-label="Action center" className="mr-2">
          <svg viewBox="0 0 17 17" className="size-[17px]">
            <path d="M2 1v15" stroke="#fff" strokeWidth="1.500" />
            <path d="M3 2h5l1 2h6v7H9L8 9H3z" fill="#fff" />
            <circle cx="11.500" cy="11.500" r="5" fill="#d82820" />
            <path d="M9.500 9.500l4 4M13.500 9.500l-4 4" stroke="#fff" strokeWidth="1.500" />
          </svg>
        </button>
        <button type="button" aria-label="Volume" className="mr-2">
          <svg viewBox="0 0 16 16" className="size-4">
            <path d="M1 5h3l4-4v14l-4-4H1z" fill="#fff" />
            <path d="M10 5.500q1.500 2.500 0 5M12 3.500q3 4.500 0 9" fill="none" stroke="#d8e0e8" />
          </svg>
        </button>
        <button type="button" aria-label="Network" className="mr-2.5">
          <svg viewBox="0 0 16 16" className="size-4" fill="none" stroke="#fff">
            <path d="M5 3.500h10v8H6M8 14.500h6M11 11.500v3" strokeWidth="1.500" />
            <path d="M1 1v4h3V1M2.500 5v9h3" />
          </svg>
        </button>
        <time className={`w-[70px] text-center text-[12px] leading-[18px] text-white ${SANS}`}>
          <span className="block">21:11</span>
          <span className="block">2022/5/7</span>
        </time>
        <button type="button" aria-label="Show desktop" className="ml-1 h-full w-[14px] border border-[#7888a0] bg-linear-to-b from-[#50607a] to-[#1a2840]" />
      </div>
    </nav>
  );
}

/* ---------- page ---------- */

export default function App() {
  const [popOpen, setPopOpen] = useState(true);
  return (
    <div className="relative flex h-screen flex-col overflow-hidden bg-black text-black">
      <TitleBar />
      <MenuBar />
      <main className="flex min-h-0 flex-1">
        <Sidebar />
        <div className="min-w-0 flex-1 overflow-hidden">
          <Boards />
        </div>
        <RightPanel />
      </main>
      <CommandRow />
      <StatusBar />
      <Taskbar />
      {popOpen && <PopView onClose={() => setPopOpen(false)} />}
      <svg viewBox="0 0 1920 1080" className="pointer-events-none absolute inset-0 h-full w-full" aria-hidden="true">
        <path d="M557 521L130 933" stroke="#00ff00" strokeWidth="4" strokeLinecap="round" />
        <path d="M117 945L129 919L136 924L143 932Z" fill="#00ff00" />
      </svg>
    </div>
  );
}
